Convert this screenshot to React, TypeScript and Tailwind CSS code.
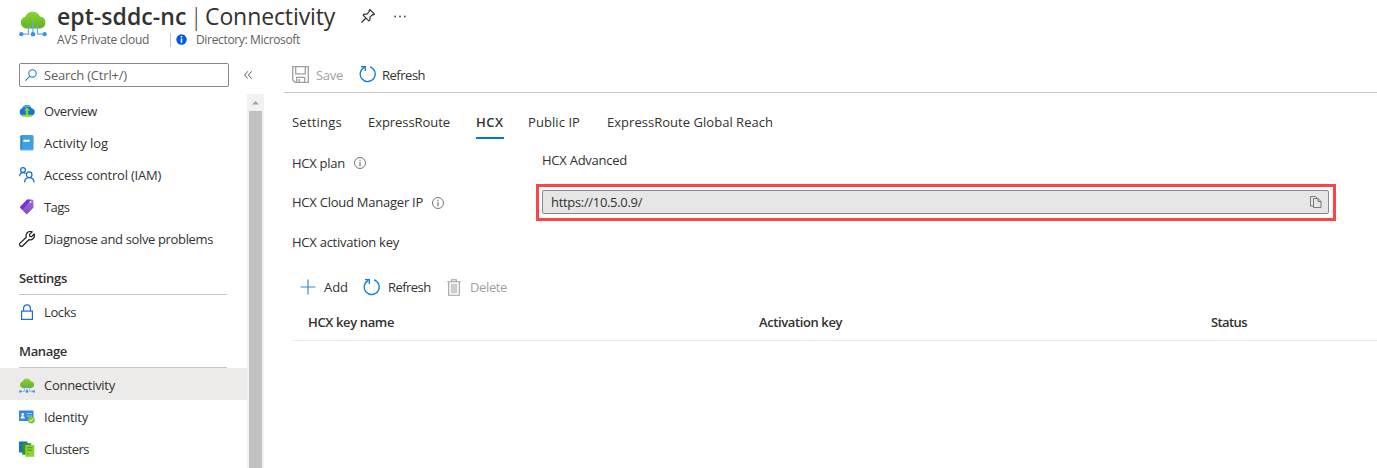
import type { ReactNode } from "react";

function CloudNet({ className }: { className: string }) {
  return (
    <svg viewBox="0 0 28 28" className={className}>
      <defs>
        <linearGradient id="leaf" x1="0" y1="0" x2="0" y2="1">
          <stop offset="0" stopColor="#86d633" />
          <stop offset="1" stopColor="#66b022" />
        </linearGradient>
      </defs>
      <path d="M7 19.400A6 6 0 0 1 6.200 7.700 8 8 0 0 1 21 7.500a6 6 0 0 1 .3 11.900z" fill="url(#leaf)" />
      <path d="M14 12v13M9.500 16.500v8.700H2.500M18.500 16.500v8.700h7" fill="none" stroke="#6aaaf2" strokeWidth="1.300" />
      <circle cx="2.300" cy="25.200" r="2.100" fill="#3f8ee8" />
      <circle cx="14" cy="25.200" r="2.300" fill="#3f8ee8" />
      <circle cx="25.700" cy="25.200" r="2.100" fill="#3f8ee8" />
    </svg>
  );
}

function OverviewIcon() {
  return (
    <svg viewBox="0 0 16 16" className="size-4">
      <path d="M3.700 12.700A3.700 3.700 0 0 1 3 5.600 5 5 0 0 1 12.500 5.200a3.800 3.800 0 0 1 .2 7.500z" fill="#1b74d4" />
      <path d="M3.400 5.600a4.800 4.800 0 0 1 8.800-1.200C9 3.700 6 4.200 3.400 5.600z" fill="#4fa9ef" />
      <path d="M8 4.200l3 3.200H9.100v4.300h3.800v2h-9.800v-2h3.800V7.400H5z" fill="#86d92e" />
    </svg>
  );
}

function ActivityIcon() {
  return (
    <svg viewBox="0 0 16 16" className="size-4">
      <rect x="1.300" y=".3" width="13" height="15" rx="1" fill="#1f78c8" />
      <rect x="2.600" y="1" width="11.700" height="13.200" fill="#3ba0e6" />
      <path d="M2.300 14.700h11.500" stroke="#8cc8f2" strokeWidth=".7" />
      <rect x="4.500" y="4.800" width="6" height="2" rx=".4" fill="#fff" />
    </svg>
  );
}

function PeopleIcon() {
  return (
    <svg viewBox="0 0 16 16" className="size-4" fill="none" stroke="#1668d8" strokeWidth="1.200">
      <circle cx="4" cy="3" r="2.400" />
      <path d="M.6 9.300C.8 6.700 2.200 5.600 4 5.600c1 0 1.900.4 2.500 1.100" />
      <circle cx="10.200" cy="7.700" r="2.800" />
      <path d="M5.500 15.400c.2-3.200 2-4.800 4.700-4.800s4.600 1.600 4.900 4.800" />
    </svg>
  );
}

function TagIcon() {
  return (
    <svg viewBox="0 0 16 16" className="size-4">
      <defs>
        <linearGradient id="violet" x1="0" y1="0" x2="0" y2="1">
          <stop offset="0" stopColor="#a46cec" />
          <stop offset="1" stopColor="#7c4cb8" />
        </linearGradient>
      </defs>
      <path d="M8.700.6l4.700.1c.6 0 .9.4.9.9l.3 6.200c0 .5-.2.900-.5 1.200L8.500 14.800c-.5.500-1 .5-1.500 0L1.500 9c-.5-.500-.5-1 0-1.500L7.500 1.200c.300-.400.7-.6 1.200-.6z" fill="url(#violet)" />
      <path d="M8.700.6l3.600.1L3.300 10.900 1.500 9c-.5-.5-.5-1 0-1.500L7.500 1.200c.300-.400.7-.6 1.200-.6z" fill="#7433d8" />
      <circle cx="11.500" cy="2.900" r=".9" fill="#fff" />
    </svg>
  );
}

function WrenchIcon() {
  return (
    <svg viewBox="0 0 16 16" className="size-4" fill="none" stroke="#222" strokeWidth="1.250" strokeLinejoin="round">
      <path d="M13.200.9A4.300 4.300 0 0 0 7.300 6.200L1.100 12.100a1.850 1.850 0 0 0 2.700 2.700L9.900 8.700a4.300 4.300 0 0 0 5.200-5.700L12.700 5.600l-1.900-.3-.3-1.900z" />
    </svg>
  );
}

function LockIcon() {
  return (
    <svg viewBox="0 0 16 16" className="size-4" fill="none" stroke="#1f69dc" strokeWidth="1.200">
      <rect x="2.600" y="7.100" width="10.800" height="8.300" />
      <path d="M4.600 7V4.200a3.400 3.400 0 0 1 6.800 0V7" />
    </svg>
  );
}

function IdentityIcon() {
  return (
    <svg viewBox="0 0 16 16" className="size-4">
      <rect x="0" y="1.500" width="14.500" height="10.500" rx=".6" fill="#3285e0" />
      <circle cx="3.700" cy="5.500" r="1.400" fill="#fff" />
      <path d="M1.500 9.500c0-3.300 4.400-3.300 4.400 0z" fill="#fff" />
      <path d="M7.500 4.500h5.500M7.500 7h5.500" stroke="#9cc9f7" strokeWidth="1" />
      <circle cx="12.400" cy="11" r="3.400" fill="#79cb2f" />
      <path d="M10.700 11l1.200 1.300 2.200-2.500" fill="none" stroke="#fff" strokeWidth=".9" />
    </svg>
  );
}

function ClustersIcon() {
  return (
    <svg viewBox="0 0 16 16" className="size-4">
      <rect x="0" y=".4" width="8.500" height="11.200" rx=".5" fill="#1272cf" />
      <rect x="3.200" y="2.200" width="9" height="11.500" rx=".5" fill="#3f8f24" />
      <rect x="6.300" y="4" width="9" height="11.700" rx=".5" fill="#86d633" />
      <path d="M8.300 6.700h5M8.300 9.200h5" stroke="#4f8f22" strokeWidth="1.100" />
      <circle cx="9" cy="12.700" r=".8" fill="#5a9c24" />
    </svg>
  );
}

function RefreshIcon() {
  return (
    <svg viewBox="0 0 18 18" className="size-[18px] shrink-0" fill="none" stroke="#0f7bd8" strokeWidth="1.300">
      <path d="M11 1.900a7.500 7.500 0 1 1-5.600.4" />
      <path d="M2 1.700h4.300V6" />
    </svg>
  );
}

function SaveIcon() {
  return (
    <svg viewBox="0 0 17 17" className="size-[17px] shrink-0" fill="none" stroke="#a19f9d" strokeWidth="1.300">
      <path d="M.7.700h15.600v15.600H3L.7 14z" />
      <path d="M3.700 1v6.800h9.600V1M4.700 16v-4.700h8V16M7.200 13v3" />
    </svg>
  );
}

function TrashIcon() {
  return (
    <svg viewBox="0 0 14 17" className="h-[17px] w-[14px] shrink-0" fill="none" stroke="#a19f9d" strokeWidth="1.100">
      <path d="M.3 2.700h13.400M4.700 2.500V.7h4.600v1.800M1.700 3v13.300h10.600V3" />
      <rect x="4.200" y="5.200" width="5.600" height="8.600" fill="#d0cfce" stroke="#c4c2c0" strokeWidth=".8" />
    </svg>
  );
}

function InfoIcon() {
  return (
    <svg viewBox="0 0 12 12" className="size-3 shrink-0">
      <circle cx="6" cy="6" r="5.500" fill="none" stroke="#696765" strokeWidth=".9" />
      <path d="M6 5v4.200M6 2.800v1.200" stroke="#696765" strokeWidth="1.100" />
    </svg>
  );
}

function NavItem({ icon, label, tracking, active }: { icon: ReactNode; label: string; tracking: string; active?: boolean }) {
  return (
    <div className={`flex h-8 items-center gap-[9px] pl-[19px] pt-0.5 ${active ? "bg-[#edebe9]" : ""}`}>
      {icon}
      <span className={tracking}>{label}</span>
    </div>
  );
}

function Section({ label, tracking }: { label: string; tracking: string }) {
  return (
    <div className="flex h-[41px] pl-[19px] pr-5">
      <div className={`grow border-b border-[#c8c6c4] pt-[14px] font-semibold ${tracking}`}>{label}</div>
    </div>
  );
}

export default function App() {
  return (
    <div className="flex h-[468px] w-[1377px] flex-col overflow-hidden whitespace-nowrap bg-white font-['Open_Sans','Noto_Sans',sans-serif] text-[13px] leading-5 text-[#323130]">
      <header className="flex h-[60px] shrink-0 pl-[19px]">
        <CloudNet className="mt-[9px] size-7 shrink-0" />
        <div className="ml-[10px]">
          <div className="flex h-8 items-center text-[23px] leading-8">
            <span className="w-[133px] font-semibold tracking-[0.06px]">ept-sddc-nc</span>
            <span className="w-[15px] font-light">|</span>
            <span className="w-[131px] tracking-[-0.1px]">Connectivity</span>
            <svg viewBox="0 0 16 16" className="ml-6 size-4" fill="none" stroke="#323130" strokeWidth="1.200" strokeLinejoin="round">
              <path d="M9.800 1.500l4.700 4.700-1.300.7-.8-.2-2.500 2.500.1 2.500-1.200 1.200-5.700-5.700 1.200-1.200 2.500.1L9.300 3.600l-.2-.8zM6 10l-4.500 4.500" />
            </svg>
            <svg viewBox="0 0 12 3" className="ml-[18px] h-[3px] w-3" fill="#494847">
              <circle cx="1.200" cy="1.500" r=".9" />
              <circle cx="6" cy="1.500" r=".9" />
              <circle cx="10.800" cy="1.500" r=".9" />
            </svg>
          </div>
          <div className="flex h-4 items-center text-[12px] leading-4 text-[#605e5c]">
            <span className="w-[113px] tracking-[-0.299px]">AVS Private cloud</span>
            <span className="h-[14px] w-px bg-[#c8c6c4]" />
            <svg viewBox="0 0 11 11" className="-mt-0.5 ml-[5px] size-[11px]">
              <circle cx="5.500" cy="5.500" r="5.200" fill="#015cda" />
              <path d="M5.500 4.500v4.200M5.500 2v1.500" stroke="#fff" strokeWidth="1.500" />
            </svg>
            <span className="ml-[9px] tracking-[-0.338px]">Directory: Microsoft</span>
          </div>
        </div>
      </header>

      <div className="flex min-h-0 grow">
        <aside className="w-[264px] shrink-0">
          <div className="flex h-[34px] items-start pl-[19px] pt-[3px]">
            <div className="flex h-6 w-[210px] items-center gap-[7px] rounded-[2px] border border-[#8a8886] pl-[5px] text-[#605e5c]">
              <svg viewBox="0 0 12 12" className="size-3" fill="none" stroke="#1f7fd6" strokeWidth="1.100">
                <circle cx="7.500" cy="4.400" r="3.700" />
                <path d="M4.900 7.100L.4 11.600" />
              </svg>
              <span className="tracking-[-0.188px]">Search (Ctrl+/)</span>
            </div>
            <svg viewBox="0 0 8 8" className="ml-[15px] mt-2 size-2" fill="none" stroke="#494847" strokeWidth=".9">
              <path d="M3.800.3L.6 4l3.200 3.700M7.600.3L4.400 4l3.200 3.700" />
            </svg>
          </div>
          <div className="flex">
            <nav className="w-[247px]">
              <NavItem icon={<OverviewIcon />} label="Overview" tracking="tracking-[-0.42px]" />
              <NavItem icon={<ActivityIcon />} label="Activity log" tracking="tracking-[-0.07px]" />
              <NavItem icon={<PeopleIcon />} label="Access control (IAM)" tracking="tracking-[-0.22px]" />
              <NavItem icon={<TagIcon />} label="Tags" tracking="tracking-[-0.6px]" />
              <NavItem icon={<WrenchIcon />} label="Diagnose and solve problems" tracking="tracking-[-0.35px]" />
              <Section label="Settings" tracking="tracking-[-0.29px]" />
              <NavItem icon={<LockIcon />} label="Locks" tracking="tracking-[-0.37px]" />
              <Section label="Manage" tracking="tracking-[-0.33px]" />
              <NavItem icon={<CloudNet className="size-4" />} label="Connectivity" tracking="tracking-[-0.28px]" active />
              <NavItem icon={<IdentityIcon />} label="Identity" tracking="tracking-[-0.24px]" />
              <NavItem icon={<ClustersIcon />} label="Clusters" tracking="tracking-[-0.51px]" />
            </nav>
            <div className="flex h-[374px] w-[17px] flex-col items-center bg-[#f1f1f1]">
              <svg viewBox="0 0 17 17" className="size-[17px]">
                <path d="M5 10.500h7L8.500 7z" fill="#a3a3a3" />
              </svg>
              <div className="w-[13px] grow bg-[#c1c1c1]" />
            </div>
          </div>
        </aside>

        <main className="ml-5 flex grow flex-col">
          <div className="flex h-[33px] items-center border-b border-[#c8c6c4] pl-2">
            <div className="-mt-1 flex items-center">
              <SaveIcon />
              <span className="ml-[7px] w-[43px] pt-0.5 tracking-[-0.28px] text-[#a19f9d]">Save</span>
              <RefreshIcon />
              <span className="ml-[5px] pt-0.5 tracking-[-0.48px]">Refresh</span>
            </div>
          </div>

          <div className="ml-2 mt-4 flex h-[30px] pt-[3px]">
            <span className="w-[76px] tracking-[0.224px]">Settings</span>
            <span className="w-[108px] tracking-[-0.061px]">ExpressRoute</span>
            <span className="mr-6 w-7 border-b-2 border-[#0078d4] font-semibold tracking-[0.5px]">HCX</span>
            <span className="w-[79px] tracking-[0.07px]">Public IP</span>
            <span className="tracking-[0.03px]">ExpressRoute Global Reach</span>
          </div>

          <div className="ml-2 flex h-[45px]">
            <div className="mt-[14px] flex h-5 w-[250px] items-center">
              <span className="w-[62px] tracking-[-0.26px]">HCX plan</span>
              <InfoIcon />
            </div>
            <span className="pt-[11px] tracking-[-0.25px]">HCX Advanced</span>
          </div>
          <div className="ml-2 flex h-[37px] items-center">
            <div className="flex w-[244px] items-center">
              <span className="w-[140px] pb-px tracking-[-0.24px]">HCX Cloud Manager IP</span>
              <InfoIcon />
            </div>
            <div className="h-[37px] w-[800px] border-3 border-[#fc4444] p-[3px]">
              <div className="flex h-6 w-[787px] items-center justify-between rounded-[2px] border border-[#8a8886] bg-[#e6e6e6] pl-2 pr-[6px]">
                <span className="tracking-[-0.32px]">https://10.5.0.9/</span>
                <svg viewBox="0 0 12 12" className="size-3" fill="none" stroke="#706e6c" strokeWidth=".9">
                  <path d="M3.500 10H.5V.5h5l1.500 1.500M3.500 2.500h4.500l3 3v6H3.500zM8 2.500v3h3" />
                </svg>
              </div>
            </div>
          </div>
          <div className="ml-2 mt-[11px] tracking-[-0.25px]">HCX activation key</div>

          <div className="ml-4 mt-[25px] flex h-5 items-center">
            <svg viewBox="0 0 16 16" className="size-4" stroke="#2f8ddc" strokeWidth="1.200">
              <path d="M8 .5v15M.5 8h15" />
            </svg>
            <span className="ml-2 w-[39px] tracking-[-0.04px]">Add</span>
            <RefreshIcon />
            <span className="ml-[7px] w-[59px] tracking-[-0.55px]">Refresh</span>
            <TrashIcon />
            <span className="ml-[9px] tracking-[-0.37px] text-[#a19f9d]">Delete</span>
          </div>

          <div className="ml-2 mt-[15px] flex h-[29px] border-b border-[#edebe9] pl-4 font-semibold">
            <span className="w-[451px] tracking-[-0.37px]">HCX key name</span>
            <span className="w-[452px] tracking-[-0.39px]">Activation key</span>
            <span className="tracking-[-0.59px]">Status</span>
          </div>
        </main>
      </div>
    </div>
  );
}
